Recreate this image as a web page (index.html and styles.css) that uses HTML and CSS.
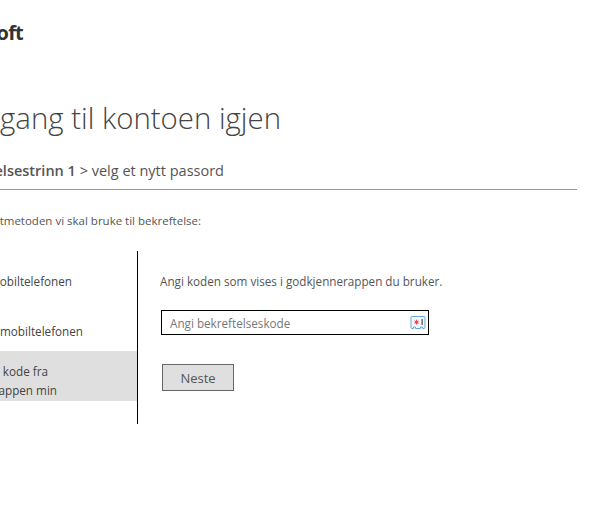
FILE: index.html
```html
<!DOCTYPE html>
<html>

<head>
	<title>Få tilgang til kontoen igjen</title>
	<meta name="viewport" content="width=device-width, initial-scale=1.0">
	<link rel="stylesheet" href="styles.css">
</head>

<body>
	<div class="page">
		<div class="logo">Microsoft</div>
		<h1 class="title">Få tilgang til kontoen igjen</h1>
		<div class="steps"><b>bekreftelsestrinn 1</b> &gt; velg et nytt passord</div>
		<p class="lead">Velg kontaktmetoden vi skal bruke til bekreftelse:</p>

		<div class="verify">
			<ul class="methods">
				<li class="method sms">Send SMS til mobiltelefonen</li>
				<li class="method call">Ring mobiltelefonen</li>
				<li class="method selected">
					<span class="line-one">Skriv inn kode fra</span>
					<span class="line-two">godkjennerappen min</span>
				</li>
			</ul>
			<div class="panel">
				<p class="hint">Angi koden som vises i godkjennerappen du bruker.</p>
				<div class="field">
					<input class="code" type="text" placeholder="Angi bekreftelseskode">
					<!-- password manager badge -->
					<svg class="badge" width="16" height="16" viewBox="0 0 16 16">
						<path d="M2 1.500h12a1 1 0 0 1 1 1v10a1 1 0 0 1-1 1h-1.500v-1.500h-2v1.500h-5v-1.500h-2v1.500H2a1 1 0 0 1-1-1v-10a1 1 0 0 1 1-1z" fill="#f4f9ff" stroke="#6aa5e0"/>
						<path d="M6.500 4l.7 1.900 1.900-.3-1.200 1.500 1.200 1.600-1.900-.4-.7 1.900-.7-1.900-1.900.4 1.200-1.600-1.200-1.500 1.900.3z" fill="#f0434f"/>
						<rect x="11.500" y="4" width="1.300" height="6" fill="#555"/>
					</svg>
				</div>
				<button class="next" type="button">Neste</button>
			</div>
		</div>
	</div>
</body>

</html>
```

FILE: styles.css
```css
html, body {
	margin: 0;
	height: 509px;
	overflow: hidden;
	background: #fff;
}

/* the window is scrolled a bit to the right, so the left side is cut off */
.page {
	margin-left: -97px;
	width: 674px;
	padding-top: 21px;
	font-family: "Open Sans", "Noto Sans", sans-serif;
	font-size: 11.700px;
	color: #555;
}

.logo {
	height: 24px;
	padding-right: 554px;
	text-align: right;
	line-height: 24px;
	font-size: 20px;
	font-weight: 700;
	letter-spacing: -0.8px;
	color: #333;
}

.title {
	margin: 45px 0 0;
	padding-right: 296px;
	text-align: right;
	font-size: 29.400px;
	line-height: 56px;
	font-weight: 300;
	color: #444;
}

.steps {
	margin-top: 15px;
	padding: 0 353px 8px 0;
	text-align: right;
	font-size: 14.500px;
	line-height: 20px;
	border-bottom: 1px solid #999;
}

.steps b {
	font-weight: 600;
}

.lead {
	margin: 23px 0 0;
	padding-right: 376px;
	text-align: right;
	font-size: 11.500px;
	line-height: 16px;
}

.verify {
	display: flex;
	margin-top: 22px;
}

.methods {
	list-style: none;
	margin: 0;
	padding: 0 0 23px;
	width: 234px;
	border-right: 1px solid #000;
}

.method {
	height: 50px;
	box-sizing: border-box;
	padding-top: 20px;
	text-align: right;
	line-height: 20px;
	color: #444;
}

.method.sms {
	padding-right: 65px;
}

.method.call {
	padding-right: 54px;
}

.method.selected {
	padding-top: 11px;
	line-height: 19px;
	background: #dfdfdf;
}

.line-one, .line-two {
	display: block;
}

.line-one {
	padding-right: 89px;
}

.line-two {
	padding-right: 80px;
}

.panel {
	padding: 21px 0 0 22px;
}

.hint {
	margin: 0;
	line-height: 18px;
}

.field {
	position: relative;
	margin: 20px 0 0 1px;
	width: 268px;
}

.code {
	display: block;
	box-sizing: border-box;
	width: 268px;
	height: 25px;
	padding: 0 8px;
	border: 1px solid #000;
	outline: none;
	font: inherit;
}

.code::placeholder {
	color: #777;
	opacity: 1;
}

.badge {
	position: absolute;
	top: 5px;
	right: 3px;
}

.next {
	display: block;
	margin: 29px 0 0 2px;
	width: 72px;
	height: 27px;
	background: #dfdfdf;
	border: 1px solid #666;
	font: inherit;
	font-size: 13px;
	color: #555;
}
```
